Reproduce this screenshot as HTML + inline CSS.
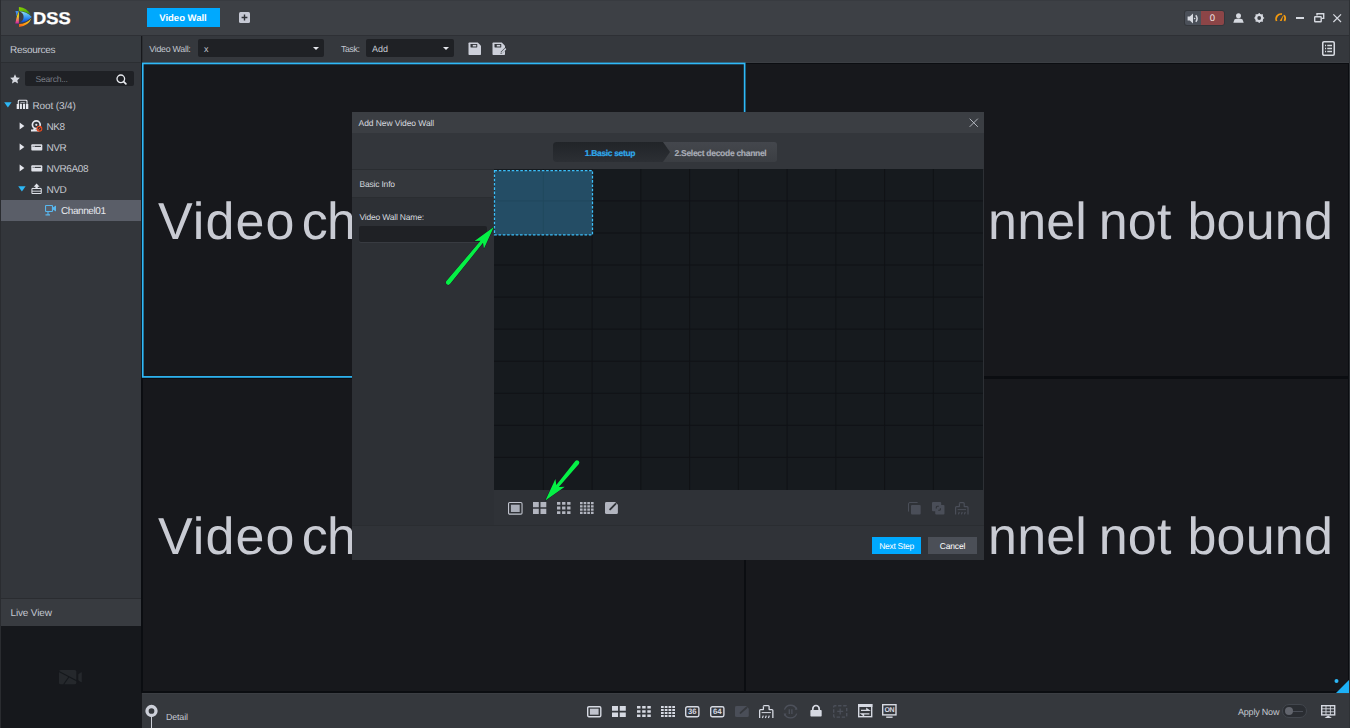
<!DOCTYPE html>
<html lang="en">
<head>
<meta charset="utf-8">
<title>DSS - Video Wall</title>
<style>
*{box-sizing:border-box;margin:0;padding:0}
html,body{width:1350px;height:728px;overflow:hidden;background:#17181c}
body{position:relative;text-rendering:geometricPrecision;font-family:"Liberation Sans",sans-serif;font-size:9.5px;color:#c9ccd4;-webkit-font-smoothing:antialiased}
.abs{position:absolute}
svg{position:absolute;overflow:visible}
/* title bar */
#titlebar{left:0;top:0;width:1350px;height:35px;background:#3d4045}
#tbline{left:0;top:35px;width:1350px;height:1px;background:#2e3035}
#logo-text{left:33.200px;top:8.900px;font-size:17px;font-weight:bold;color:#fff;letter-spacing:.1px;line-height:19px;-webkit-text-stroke:.3px #fff;transform-origin:0 0;transform:scaleX(1.075)}
#tab{left:147px;top:8px;width:73px;height:19px;background:#00a9fe;color:#fff;font-weight:bold;font-size:9.5px;line-height:21px;text-align:center;padding-right:1px}
#plus{left:239px;top:12px;width:11px;height:11px;background:#c6c9d4;border-radius:1.5px}
/* side bar */
#side{left:0;top:36px;width:141px;height:692px;background:#33363b}
#side-head{left:0;top:36px;width:141px;height:26px;background:#363a3f;font-size:10px;letter-spacing:-.3px;line-height:30.500px;padding-left:10px;color:#c3c7d0}
#side-line{left:0;top:62px;width:141px;height:1px;background:#2b2e32}
#search{left:25px;top:71px;width:109px;height:15px;background:#1f2125;border-radius:2px;color:#777b84;font-size:8.600px;letter-spacing:-.25px;line-height:17px;padding-left:10.500px}
.row{left:0;width:142px;height:21px;line-height:24px;font-size:10px;color:#c3c6ce;letter-spacing:-.42px}
.row span{position:absolute;top:0}
#sel{left:0;top:200px;width:141px;height:21px;background:#5a5e68}
#live-head{left:0;top:598px;width:141px;height:28px;background:#383b40;border-top:1px solid #2a2c30;font-size:10px;line-height:30px;padding-left:10.500px;letter-spacing:-.15px;color:#c3c7d0}
#live{left:0;top:626px;width:141px;height:102px;background:#16181c}
#lborder{left:0;top:0;width:1px;height:728px;background:#2a2c30}
/* toolbar */
#toolbar{left:142px;top:36px;width:1208px;height:27px;background:#35383d;border-left:1px solid #2b2e32}
.lbl{font-size:8.5px;color:#c3c7d0;line-height:12px;letter-spacing:-.15px}
.dd{background:#1f2125;border-radius:2px;height:18px;top:39px;font-size:9px;line-height:20.500px;color:#c3c7d0;padding-left:6px}
.dd i{position:absolute;right:4.700px;top:8px;width:0;height:0;border-left:3.400px solid transparent;border-right:3.400px solid transparent;border-top:3.800px solid #e6e8ee}
/* main */
#main{left:141px;top:63px;width:1208px;height:630px;background:#0b0d11}
.pane{background:#17181c}
.big{font-size:52px;line-height:60px;color:#c9cbd3;white-space:nowrap}
.bl{left:158px;letter-spacing:-.6px;word-spacing:-7.550px}
.br{right:15px;top:0;letter-spacing:.19px}
.clipr{left:989px;width:359px;height:62px;overflow:hidden}
#rborder{left:1349px;top:0;width:1px;height:728px;background:#2e3135}
/* bottom bar */
#bottom{left:142px;top:693px;width:1207px;height:35px;background:#35383d;border-top:1px solid #3b3e43}
/* dialog */
#dlg{left:352px;top:112px;width:632px;height:448px;background:#2d3035}
#dlg-title{left:0;top:0;width:632px;height:21px;background:#3b3e43;font-size:8.5px;line-height:22.500px;padding-left:6.600px;color:#d5d8df;letter-spacing:-.08px}
#dlg-steps{left:0;top:21px;width:632px;height:36px;background:#33363b}
#dlg-sline{left:0;top:57px;width:632px;height:1px;background:#2a2d31}
#step-pill{left:201px;top:30px;width:224px;height:20px;border-radius:3px;background:linear-gradient(#44474d,#3b3e43);overflow:hidden}
#bi-head{left:0;top:58px;width:142px;height:28px;background:#34373c;border-bottom:1px solid #2a2d31;font-size:8.5px;line-height:28.500px;padding-left:7.500px;color:#d5d8df;letter-spacing:-.2px}
#grid{left:142px;top:57px;width:489px;height:321px;background:#161a1e}
#iconbar{left:142px;top:378px;width:490px;height:35px;background:#2f3237}
#footer{left:0;top:413px;width:632px;height:35px;background:#303338;border-top:1px solid #2a2d31}
.btn{top:425px;height:17px;font-size:8.5px;line-height:18px;text-align:center;color:#fff}
</style>
</head>
<body>
<!-- TITLE BAR -->
<div id="titlebar" class="abs"></div>
<div id="tbline" class="abs"></div>
<div class="abs" style="left:0;top:0;width:1350px;height:1px;background:#383b40"></div>
<svg style="left:14px;top:6px" width="19" height="22" viewBox="0 0 19 22">
  <defs>
    <linearGradient id="lg1" x1="0" y1="0" x2="0" y2="1"><stop offset="0" stop-color="#e8f01a"/><stop offset=".4" stop-color="#f4d81a"/><stop offset=".75" stop-color="#ee6a70"/><stop offset="1" stop-color="#c818a8"/></linearGradient>
    <linearGradient id="lg2" x1="0" y1="0" x2="1" y2="1"><stop offset="0" stop-color="#8fd400"/><stop offset="1" stop-color="#2f9a10"/></linearGradient>
    <linearGradient id="lg3" x1="0" y1="0" x2="0" y2="1"><stop offset="0" stop-color="#8fe4f4"/><stop offset=".6" stop-color="#2f8ef0"/><stop offset="1" stop-color="#0a3fd0"/></linearGradient>
    <linearGradient id="lg4" x1="1" y1="0" x2="0" y2="1"><stop offset="0" stop-color="#ffe81a"/><stop offset=".6" stop-color="#ff9a10"/><stop offset="1" stop-color="#f0501a"/></linearGradient>
  </defs>
  <path d="M1.400 4.900H4.600L2.500 10.600Q2.400 7.500 1.400 4.900z" fill="#3f8ff0"/>
  <path d="M4.900 5.100V17.600L1.300 17.400Q2.200 13 3 10z" fill="url(#lg1)"/>
  <path d="M4.900 .900Q13.200 1.600 16.600 8.800Q11 4.600 4.900 4.900z" fill="url(#lg2)"/>
  <path d="M5.300 5.300Q12.500 5.400 17.800 11Q12.500 16.600 5.300 16.600Q9.600 15 9.600 11Q9.600 7 5.300 5.300z" fill="url(#lg3)"/>
  <path d="M5.100 18.100Q12.500 17.800 17.400 12.500Q14.600 19.600 5.100 21.100z" fill="url(#lg4)"/>
</svg>
<div id="logo-text" class="abs">DSS</div>
<div id="tab" class="abs">Video Wall</div>
<div id="plus" class="abs"></div>
<svg style="left:239px;top:12px" width="11" height="11" viewBox="0 0 11 11"><path d="M5.5 2.6v5.8M2.6 5.5h5.8" stroke="#2d3035" stroke-width="1.4" fill="none"/></svg>

<!-- top-right icons -->
<div class="abs" style="left:1185px;top:11px;width:16px;height:13.500px;background:#4b5059;border-radius:2px 0 0 2px;box-shadow:0 0 0 1px #33363b"></div>
<div class="abs" style="left:1201px;top:11px;width:23px;height:13.500px;background:#8c4547;border-radius:0 2px 2px 0;box-shadow:1px 0 0 0 #33363b,0 1px 0 0 #33363b,0 -1px 0 0 #33363b;color:#f1e4e4;font-size:9.500px;line-height:15px;text-align:center">0</div>
<svg style="left:1187px;top:12.500px" width="13" height="11" viewBox="0 0 13 11"><path d="M0.600 3.400h2.200L6 .600v9.800L2.800 7.600H.600z" fill="#d6d9e0"/><circle cx="7.600" cy="5.500" r=".8" fill="#d6d9e0"/><path d="M8.800 2.200q2.600 3.300 0 6.600" stroke="#d6d9e0" stroke-width="1.500" fill="none"/></svg>
<svg style="left:1232.500px;top:12.500px" width="11" height="10" viewBox="0 0 11 10"><circle cx="5.500" cy="2.700" r="2.500" fill="#d6d9e0"/><path d="M.300 9.800 L1.600 6.300 Q5.500 4.600 9.400 6.300 L10.700 9.800z" fill="#d6d9e0"/></svg>
<svg style="left:1254px;top:12.800px" width="10.400" height="10" viewBox="0 0 10.400 10"><path d="M4.56 1.15L4.58 0.04L5.82 0.04L5.84 1.15L7.47 1.83L8.27 1.06L9.14 1.93L8.37 2.73L9.05 4.36L10.16 4.38L10.16 5.62L9.05 5.64L8.37 7.27L9.14 8.07L8.27 8.94L7.47 8.17L5.84 8.85L5.82 9.96L4.58 9.96L4.56 8.85L2.93 8.17L2.13 8.94L1.26 8.07L2.03 7.27L1.35 5.64L0.24 5.62L0.24 4.38L1.35 4.36L2.03 2.73L1.26 1.93L2.13 1.06L2.93 1.83Z" fill="#d6d9e0"/><circle cx="5.200" cy="5" r="4.100" fill="#d6d9e0"/><circle cx="5.200" cy="5" r="1.900" fill="#3d4045"/></svg>
<svg style="left:1275px;top:13.300px" width="11" height="8.500" viewBox="0 0 22 17"><path d="M3.200 16 A9.800 9.800 0 0 1 14 2.200" stroke="#f39a0f" stroke-width="3.400" fill="none"/><path d="M18 4.600 A9.800 9.800 0 0 1 18.800 16" stroke="#f39a0f" stroke-width="3.400" fill="none"/><path d="M9.400 16 L17.600 2.400 L13.400 16z" fill="#f39a0f"/></svg>
<div class="abs" style="left:1296px;top:17.200px;width:8px;height:1.800px;background:#d6d9e0"></div>
<svg style="left:1313.500px;top:13px" width="10.500" height="9.500" viewBox="0 0 21 19"><path d="M6 5V1.400h13.400V10.800H16" stroke="#d6d9e0" stroke-width="2.800" fill="none"/><rect x="1.400" y="7.400" width="13" height="10" rx="1" stroke="#d6d9e0" stroke-width="2.800" fill="none"/></svg>
<svg style="left:1332.600px;top:13.800px" width="8.400" height="8.400" viewBox="0 0 9 9"><path d="M.400.400l8.200 8.200M8.600.400L.400 8.600" stroke="#d6d9e0" stroke-width="1.300" fill="none"/></svg>

<!-- SIDEBAR -->
<div id="side" class="abs"></div>
<div id="side-head" class="abs">Resources</div>
<div id="side-line" class="abs"></div>
<svg style="left:10px;top:74px" width="10" height="10" viewBox="0 0 20 20"><path d="M10 .500l2.900 6.300 6.800.800-5 4.700 1.300 6.800L10 15.700 4 19.100l1.300-6.800-5-4.700 6.800-.800z" fill="#d6d9e0"/></svg>
<div id="search" class="abs">Search...</div>
<svg style="left:116px;top:73.500px" width="12" height="11.500" viewBox="0 0 24 23"><circle cx="9.600" cy="9.600" r="7.600" stroke="#e8eaef" stroke-width="2.600" fill="none"/><path d="M15.200 15.200l4.600 4.600" stroke="#e8eaef" stroke-width="3.400" stroke-linecap="round"/></svg>

<div id="sel" class="abs"></div>
<div class="row abs" style="top:95px"><span style="left:32.500px;letter-spacing:-.12px">Root (3/4)</span></div>
<div class="row abs" style="top:116px"><span style="left:46.500px;letter-spacing:-.4px">NK8</span></div>
<div class="row abs" style="top:137px"><span style="left:46.500px">NVR</span></div>
<div class="row abs" style="top:158px"><span style="left:46.500px">NVR6A08</span></div>
<div class="row abs" style="top:179px"><span style="left:46.500px">NVD</span></div>
<div class="row abs" style="top:200px;color:#e6e8ee"><span style="left:61px">Channel01</span></div>
<!-- tree arrows -->
<svg style="left:4px;top:102px" width="8" height="6" viewBox="0 0 8 6"><path d="M.2.300h7.400L3.900 5.600z" fill="#2db7f5"/></svg>
<svg style="left:19px;top:122px" width="6" height="8" viewBox="0 0 6 8"><path d="M.6.400v7L5.400 3.900z" fill="#e6e8ee"/></svg>
<svg style="left:19px;top:143px" width="6" height="8" viewBox="0 0 6 8"><path d="M.6.400v7L5.400 3.900z" fill="#e6e8ee"/></svg>
<svg style="left:19px;top:164px" width="6" height="8" viewBox="0 0 6 8"><path d="M.6.400v7L5.400 3.900z" fill="#e6e8ee"/></svg>
<svg style="left:18px;top:186px" width="8" height="6" viewBox="0 0 8 6"><path d="M.2.300h7.400L3.900 5.600z" fill="#2db7f5"/></svg>
<!-- tree icons -->
<svg style="left:16px;top:99px" width="13" height="11" viewBox="0 0 13 11"><path d="M2.300 5V2.200Q2.300 1.300 3.200 1.300H10.100Q11 1.300 11 2.200V5" stroke="#e6e8ee" stroke-width="1.100" fill="none"/><path d="M4.600 3.500H8.800" stroke="#aeb1b9" stroke-width=".8"/><path d="M.700 4.900H3V10H.700zM3.900 4.900H5.900V10H3.900zM7 4.900H9V10H7zM9.900 4.900H12.300V10H9.900z" fill="#e6e8ee"/><path d="M4.900 3.500V5M8 3.500V5" stroke="#aeb1b9" stroke-width=".8"/></svg>
<svg style="left:30px;top:119px" width="14" height="14" viewBox="0 0 14 14"><circle cx="6.300" cy="5.800" r="3.900" stroke="#e6e8ee" stroke-width="1.700" fill="none"/><circle cx="6.300" cy="5.800" r="1.100" fill="#e6e8ee"/><path d="M1 10.400h2.200l.5-1h1.600v1H9v2.100H1z" fill="#e6e8ee"/><circle cx="9.400" cy="9.700" r="2.400" fill="#33363b" stroke="#ee4a1e" stroke-width="1.100"/><path d="M8 11.100l2.800-2.800" stroke="#ee4a1e" stroke-width="1"/></svg>
<svg style="left:30.600px;top:143.500px" width="12" height="7" viewBox="0 0 12 7"><rect x=".3" y=".3" width="11" height="6.200" rx=".9" fill="#dfe1e8"/><path d="M3.800 2.400H9.900" stroke="#33363b" stroke-width="1.100"/><path d="M1.500 2.400H3.800" stroke="#8b8e96" stroke-width="1.100"/></svg>
<svg style="left:30.600px;top:164.500px" width="12" height="7" viewBox="0 0 12 7"><rect x=".3" y=".3" width="11" height="6.200" rx=".9" fill="#dfe1e8"/><path d="M3.800 2.400H9.900" stroke="#33363b" stroke-width="1.100"/><path d="M1.500 2.400H3.800" stroke="#8b8e96" stroke-width="1.100"/></svg>
<svg style="left:30.800px;top:182.800px" width="11.200" height="11.200" viewBox="0 0 24 24"><path d="M12 1l6.500 7h-4v5h-5V8h-4z" fill="#e0e2e9"/><path d="M3 11.500h3.500M17.500 11.500H21" stroke="#e0e2e9" stroke-width="2"/><rect x="2" y="12" width="20" height="10.500" rx="1.200" stroke="#e0e2e9" stroke-width="2.200" fill="none"/><path d="M2 17.500h20" stroke="#e0e2e9" stroke-width="2"/></svg>
<svg style="left:45px;top:205px" width="11.500" height="11" viewBox="0 0 23 22"><rect x="1.100" y="1.100" width="13.800" height="12" rx="1" stroke="#58b7ee" stroke-width="2.200" fill="none"/><path d="M15.500 5l6.500-3.800v11.600L15.500 9z" fill="#58b7ee"/><path d="M6 13v6M1 19.800h9" stroke="#58b7ee" stroke-width="2.200" fill="none"/></svg>

<div id="live-head" class="abs">Live View</div>
<div id="live" class="abs"></div>
<svg style="left:59px;top:669.500px" width="23" height="14.500" viewBox="0 0 23 14.500"><rect x="0" y="0" width="17.300" height="14.300" rx="1.600" fill="#25282c"/><path d="M19.300 4.200L22.200 2.300Q22.800 2.100 22.800 2.800V11.800Q22.800 12.500 22.200 12.200L19.300 10.300z" fill="#25282c"/><path d="M0 1.600L19.500 11.800" stroke="#15181c" stroke-width="1.100"/><path d="M9.800 7L4.600 14.500" stroke="#15181c" stroke-width="1.100"/></svg>
<div id="lborder" class="abs"></div>

<!-- TOOLBAR -->
<div id="toolbar" class="abs"></div>
<div class="lbl abs" style="left:149.300px;top:42.800px;font-size:8.800px;letter-spacing:-.25px">Video Wall:</div>
<div class="dd abs" style="left:198px;width:126px">x<i></i></div>
<div class="lbl abs" style="left:341px;top:42.800px;font-size:8.800px;letter-spacing:-.4px">Task:</div>
<div class="dd abs" style="left:366px;width:88px">Add<i></i></div>
<svg style="left:468px;top:42px" width="13.500" height="13.500" viewBox="0 0 27 27"><path d="M2.500 1h17L26 7.500v17q0 1.500-1.500 1.500h-22Q1 26 1 24.500v-22Q1 1 2.500 1z" fill="#cdd0da"/><rect x="5" y="4" width="13.500" height="7" rx=".8" fill="#33363b"/><rect x="9.500" y="5.800" width="7" height="3.200" fill="#cdd0da"/></svg>
<svg style="left:492px;top:42px" width="14.500" height="13.500" viewBox="0 0 29 27"><path d="M2.500 1h17L26 7.500v17q0 1.500-1.500 1.500h-22Q1 26 1 24.500v-22Q1 1 2.500 1z" fill="#cdd0da"/><rect x="5" y="4" width="13.500" height="7" rx=".8" fill="#33363b"/><rect x="9.500" y="5.800" width="7" height="3.200" fill="#cdd0da"/><path d="M17 24l1.200-5 8-8 3 3-8 8z" fill="#33363b"/><path d="M20 21l6.800-6.800" stroke="#cdd0da" stroke-width="3.200" stroke-linecap="round"/></svg>
<svg style="left:1322px;top:41px" width="13" height="15" viewBox="0 0 26 30"><rect x="1.500" y="1.500" width="23" height="27" rx="2.500" stroke="#d6d9e0" stroke-width="3.100" fill="none"/><path d="M6 9h2.200M10.500 9H20M6 15h2.200M10.500 15H20M6 21h2.200M10.500 21H20" stroke="#d6d9e0" stroke-width="2.600"/></svg>

<div class="abs" style="left:745px;top:62px;width:604px;height:1px;background:#3b3e43"></div>
<!-- MAIN -->
<div id="main" class="abs"></div>
<div class="pane abs" style="left:142px;top:63px;width:603px;height:314px"></div>
<svg style="left:0;top:0" width="1350" height="728" viewBox="0 0 1350 728"><rect x="142.750" y="63.450" width="601.900" height="313.450" fill="none" stroke="#2fb9f8" stroke-width="1.700"/></svg>
<div class="pane abs" style="left:746px;top:64px;width:602px;height:312px"></div>
<div class="pane abs" style="left:143px;top:379px;width:601px;height:312px"></div>
<div class="pane abs" style="left:746px;top:379px;width:602px;height:312px"></div>
<div class="big bl abs" style="top:192px"><span style="letter-spacing:1.070px">Video</span> channel not bound</div>
<div class="clipr abs" style="top:192px"><div class="big br abs"><span>Video</span> <span style="margin-right:-3.100px">channel</span> <span style="margin-right:1.300px">not</span> bound</div></div>
<div class="big bl abs" style="top:507px"><span style="letter-spacing:1.070px">Video</span> channel not bound</div>
<div class="clipr abs" style="top:507px"><div class="big br abs"><span>Video</span> <span style="margin-right:-3.100px">channel</span> <span style="margin-right:1.300px">not</span> bound</div></div>
<svg style="left:1336px;top:678px" width="13" height="15" viewBox="0 0 13 15"><path d="M13 2v13H0z" fill="#1db0f6"/><circle cx=".5" cy="3" r="2" fill="#2db7f5"/></svg>
<div id="rborder" class="abs"></div>

<!-- BOTTOM BAR -->
<div id="bottom" class="abs"></div>
<svg style="left:145px;top:704px" width="13" height="24" viewBox="0 0 13 24"><circle cx="6.500" cy="7" r="4.500" stroke="#cdd0d9" stroke-width="3.300" fill="none"/><path d="M6.500 12.500V24" stroke="#cdd0d9" stroke-width="1"/></svg>
<div class="lbl abs" style="left:166px;top:710.800px;font-size:8.900px">Detail</div>
<div class="lbl abs" style="left:1238px;top:705.800px;font-size:9px;letter-spacing:-.2px">Apply Now</div>
<div class="abs" style="left:1282px;top:704px;width:25px;height:14px;border-radius:7px;background:#2a2d32;border:1px solid #42464d"></div>
<div class="abs" style="left:1291px;top:710.500px;width:12px;height:1.500px;background:#4a4e57"></div>
<div class="abs" style="left:1284.500px;top:707px;width:8px;height:8px;border-radius:4px;background:#62656d"></div>

<!--BOTICONS-->
<svg style="left:587px;top:705.6px" width="14.5" height="11.4" viewBox="0 0 14.5 11.4"><rect x="0.7" y="0.7" width="13.1" height="10" rx="1.2" fill="none" stroke="#d6d9e2" stroke-width="1.4"/><rect x="2.9" y="2.7" width="8.7" height="6" fill="#c0c3cd"/></svg>
<svg style="left:611.6px;top:705.7px" width="13.8" height="11.1" viewBox="0 0 13.8 11.1"><path d="M0.00 0.00h6.05v4.70h-6.05zM7.75 0.00h6.05v4.70h-6.05zM0.00 6.40h6.05v4.70h-6.05zM7.75 6.40h6.05v4.70h-6.05z" fill="#d6d9e2"/></svg>
<svg style="left:636.8px;top:705.7px" width="13.8" height="11.1" viewBox="0 0 13.8 11.1"><path d="M0.00 0.00h3.47v2.57h-3.47zM5.17 0.00h3.47v2.57h-3.47zM10.33 0.00h3.47v2.57h-3.47zM0.00 4.27h3.47v2.57h-3.47zM5.17 4.27h3.47v2.57h-3.47zM10.33 4.27h3.47v2.57h-3.47zM0.00 8.53h3.47v2.57h-3.47zM5.17 8.53h3.47v2.57h-3.47zM10.33 8.53h3.47v2.57h-3.47z" fill="#d6d9e2"/></svg>
<svg style="left:661.2px;top:705.7px" width="14" height="11.1" viewBox="0 0 14 11.1"><path d="M0.00 0.00h2.71v1.99h-2.71zM3.76 0.00h2.71v1.99h-2.71zM7.53 0.00h2.71v1.99h-2.71zM11.29 0.00h2.71v1.99h-2.71zM0.00 3.04h2.71v1.99h-2.71zM3.76 3.04h2.71v1.99h-2.71zM7.53 3.04h2.71v1.99h-2.71zM11.29 3.04h2.71v1.99h-2.71zM0.00 6.07h2.71v1.99h-2.71zM3.76 6.07h2.71v1.99h-2.71zM7.53 6.07h2.71v1.99h-2.71zM11.29 6.07h2.71v1.99h-2.71zM0.00 9.11h2.71v1.99h-2.71zM3.76 9.11h2.71v1.99h-2.71zM7.53 9.11h2.71v1.99h-2.71zM11.29 9.11h2.71v1.99h-2.71z" fill="#d6d9e2"/></svg>
<svg style="left:685.4px;top:705.6px" width="14.6" height="11.4" viewBox="0 0 14.6 11.4"><rect x=".7" y=".7" width="13.200" height="10" rx="1.600" fill="none" stroke="#d6d9e2" stroke-width="1.400"/><text x="7.300" y="8.500" text-anchor="middle" font-family="Liberation Sans, sans-serif" font-weight="bold" font-size="7.800" fill="#d6d9e2">36</text></svg>
<svg style="left:709.8px;top:705.6px" width="14.6" height="11.4" viewBox="0 0 14.6 11.4"><rect x=".7" y=".7" width="13.200" height="10" rx="1.600" fill="none" stroke="#d6d9e2" stroke-width="1.400"/><text x="7.300" y="8.500" text-anchor="middle" font-family="Liberation Sans, sans-serif" font-weight="bold" font-size="7.800" fill="#d6d9e2">64</text></svg>
<svg style="left:735px;top:705.7px" width="13.8" height="11.1" viewBox="0 0 13.8 11.1"><path d="M1.5 0H11L13.8 2.8V9.6Q13.8 11.1 12.3 11.1H1.5Q0 11.1 0 9.6V1.5Q0 0 1.5 0z" fill="#4a4e58"/><path d="M5.52 6.882L11.316 1.776" stroke="#35383d" stroke-width="1.9" stroke-linecap="round"/></svg>
<svg style="left:759px;top:704.6px" width="14.5" height="13" viewBox="0 0 14.5 13"><path d="M0.65 13V5.6Q0.65 4.6 1.6 4.6H4.2Q4.4 4.6 4.4 4.2V1.4" fill="none" stroke="#d6d9e2" stroke-width="1.3"/><path d="M4.4 1.6Q4.4 .6 5.4 .6H9.1Q10.1 .6 10.1 1.6V4.2Q10.1 4.6 10.3 4.6H12.9Q13.85 4.6 13.85 5.6V13" fill="none" stroke="#d6d9e2" stroke-width="1.3"/><path d="M2.6 7.6H11.9" stroke="#d6d9e2" stroke-width="1"/><path d="M3.4 13l.9-2.4M6.4 13l.9-2.4M9.4 13l.9-2.4" stroke="#d6d9e2" stroke-width="1.2"/></svg>
<svg style="left:783.4px;top:703.6px" width="15.2" height="15.2" viewBox="0 0 15.2 15.2"><path d="M13.600 5.200A6.500 6.500 0 0 0 1.500 5.600M1.600 10A6.500 6.500 0 0 0 13.700 9.600" fill="none" stroke="#4d515b" stroke-width="1.300"/><path d="M11.600 5.800L14.600 5.600L13.600 3z M3.600 9.400L.6 9.600L1.600 12.200z" fill="#4d515b"/><path d="M6.300 5.200V10M8.900 5.200V10" stroke="#4d515b" stroke-width="1.300"/></svg>
<svg style="left:809.6px;top:704.4px" width="12.4" height="12.8" viewBox="0 0 12.4 12.8"><path d="M2.800 6.600V4.900A3.200 3.400 0 0 1 9.200 4.900V6.600" fill="none" stroke="#d6d9e2" stroke-width="1.700"/><rect x=".4" y="6" width="11.300" height="6.600" rx=".8" fill="#d6d9e2"/></svg>
<svg style="left:833.2px;top:704.8px" width="14.4" height="12.8" viewBox="0 0 14.4 12.8"><rect x=".7" y=".7" width="13" height="11.400" rx="1" fill="none" stroke="#4b4f59" stroke-width="1.400" stroke-dasharray="3.400 1.700" stroke-dashoffset="1.700"/><path d="M7.200 3.400V9.400M4.200 6.400H10.200" stroke="#4b4f59" stroke-width="1.300"/></svg>
<svg style="left:857.9px;top:704.3px" width="14.4" height="13.4" viewBox="0 0 14.4 13.4"><rect x=".7" y=".7" width="13" height="12" fill="none" stroke="#d6d9e2" stroke-width="1.400"/><path d="M0 0H14.400V3H0z" fill="#d6d9e2"/><path d="M3 6.400H10M8.800 4.800L11 6.400H8.800zM4.400 9.800H11.400M5.600 11.400L3.400 9.800H5.600z" stroke="#d6d9e2" stroke-width="1.200" fill="#d6d9e2"/></svg>
<svg style="left:882.3px;top:703.8px" width="14.7" height="14.2" viewBox="0 0 14.7 14.2"><rect x=".7" y=".7" width="13.300" height="10.200" fill="none" stroke="#d6d9e2" stroke-width="1.400"/><text x="7.350" y="8.500" text-anchor="middle" font-family="Liberation Sans, sans-serif" font-weight="bold" font-size="7" letter-spacing="-.4" fill="#d6d9e2">ON</text><path d="M4.200 13.200H10.600" stroke="#d6d9e2" stroke-width="1.400"/></svg>
<svg style="left:1321px;top:705px" width="14.4" height="13" viewBox="0 0 14.4 13"><rect x=".7" y=".7" width="13" height="9.200" fill="none" stroke="#d6d9e2" stroke-width="1.400"/><path d="M5 .7V9.900M9.400 .7V9.900M.7 3.800H13.700M.7 6.800H13.700" stroke="#d6d9e2" stroke-width=".9"/><path d="M3.600 13L7.200 10.400L10.800 13z" fill="#d6d9e2"/></svg>
<!--/BOTICONS-->
<!-- DIALOG -->
<div id="dlg" class="abs">
  <div id="dlg-title" class="abs">Add New Video Wall</div>
  <svg style="left:616.800px;top:6.300px" width="9.500" height="9.500" viewBox="0 0 10 10"><path d="M.700.700l8.600 8.600M9.300.700L.700 9.300" stroke="#c6c9d1" stroke-width=".9" fill="none"/></svg>
  <div id="dlg-steps" class="abs"></div>
  <div id="dlg-sline" class="abs"></div>
  <div id="step-pill" class="abs">
    <svg style="left:0;top:0" width="224" height="20" viewBox="0 0 224 20"><defs><linearGradient id="sg" x1="0" y1="0" x2="0" y2="1"><stop offset="0" stop-color="#212428"/><stop offset="1" stop-color="#2c2f34"/></linearGradient></defs><path d="M0 0h110l7 10-7 10H0z" fill="url(#sg)"/></svg>
    <div class="abs" style="left:0;top:0;width:114px;text-align:center;line-height:22.400px;font-size:8.500px;font-weight:bold;letter-spacing:-.35px;color:#30a9ec;-webkit-text-stroke:.2px #30a9ec">1.Basic setup</div>
    <div class="abs" style="left:112.500px;top:0;width:110px;text-align:center;line-height:22.400px;font-size:8.500px;font-weight:bold;letter-spacing:-.3px;color:#a9adb6;-webkit-text-stroke:.15px #a9adb6">2.Select decode channel</div>
  </div>
  <div id="bi-head" class="abs">Basic Info</div>
  <div class="abs" style="left:7.500px;top:99px;font-size:8.500px;line-height:12px;color:#d5d8df;letter-spacing:-.2px">Video Wall Name:</div>
  <div class="abs" style="left:7px;top:114.300px;width:128px;height:16.200px;background:#1f2125;border-radius:2px;box-shadow:0 1px 0 #383b41"></div>
  <div id="grid" class="abs">
    <svg style="left:0;top:0" width="489" height="321" viewBox="0 0 489 321">
      <g stroke="#101216" stroke-width="1" fill="none"><path d="M49.35 0V321M98.10 0V321M146.85 0V321M195.60 0V321M244.35 0V321M293.10 0V321M341.85 0V321M390.60 0V321M439.35 0V321"/><path d="M0 31.91H489M0 63.97H489M0 96.03H489M0 128.09H489M0 160.15H489M0 192.21H489M0 224.27H489M0 256.33H489M0 288.39H489"/></g>
      <rect x=".5" y="1.600" width="98" height="64.300" fill="#244d65"/>
      <path d="M49.350 1.600V65.900M0 31.910H98" stroke="#21485e" stroke-width="1"/>
      <rect x=".5" y="1.600" width="98" height="64.300" fill="none" stroke="#3cc0fa" stroke-width="1.250" stroke-dasharray="2.600 1.700"/>
    </svg>
  </div>
  <div id="iconbar" class="abs"></div>
  <div id="footer" class="abs"></div>
  <div class="btn abs" style="left:520px;width:49px;background:#00a9fe;letter-spacing:-.3px">Next Step</div>
  <div class="btn abs" style="left:576px;width:49px;background:#4b4f57;letter-spacing:-.15px">Cancel</div>
</div>

<!--DLGICONS-->
<svg style="left:508px;top:501.7px" width="14.6" height="12.7" viewBox="0 0 14.6 12.7"><rect x="0.55" y="0.55" width="13.5" height="11.6" rx="1.2" fill="none" stroke="#c0c3cd" stroke-width="1.1"/><rect x="2.9" y="2.7" width="8.8" height="7.3" fill="#a9adb8"/></svg>
<svg style="left:532.8px;top:502.2px" width="13.3" height="12" viewBox="0 0 13.3 12"><path d="M0.00 0.00h5.80v5.15h-5.80zM7.50 0.00h5.80v5.15h-5.80zM0.00 6.85h5.80v5.15h-5.80zM7.50 6.85h5.80v5.15h-5.80z" fill="#b2b5bf"/></svg>
<svg style="left:556.8px;top:502.2px" width="13.5" height="12" viewBox="0 0 13.5 12"><path d="M0.00 0.00h3.37v2.87h-3.37zM5.07 0.00h3.37v2.87h-3.37zM10.13 0.00h3.37v2.87h-3.37zM0.00 4.57h3.37v2.87h-3.37zM5.07 4.57h3.37v2.87h-3.37zM10.13 4.57h3.37v2.87h-3.37zM0.00 9.13h3.37v2.87h-3.37zM5.07 9.13h3.37v2.87h-3.37zM10.13 9.13h3.37v2.87h-3.37z" fill="#b2b5bf"/></svg>
<svg style="left:580px;top:502.2px" width="13.6" height="12" viewBox="0 0 13.6 12"><path d="M0.00 0.00h2.61v2.21h-2.61zM3.66 0.00h2.61v2.21h-2.61zM7.32 0.00h2.61v2.21h-2.61zM10.99 0.00h2.61v2.21h-2.61zM0.00 3.26h2.61v2.21h-2.61zM3.66 3.26h2.61v2.21h-2.61zM7.32 3.26h2.61v2.21h-2.61zM10.99 3.26h2.61v2.21h-2.61zM0.00 6.53h2.61v2.21h-2.61zM3.66 6.53h2.61v2.21h-2.61zM7.32 6.53h2.61v2.21h-2.61zM10.99 6.53h2.61v2.21h-2.61zM0.00 9.79h2.61v2.21h-2.61zM3.66 9.79h2.61v2.21h-2.61zM7.32 9.79h2.61v2.21h-2.61zM10.99 9.79h2.61v2.21h-2.61z" fill="#b2b5bf"/></svg>
<svg style="left:604.8px;top:502.2px" width="12.9" height="11.9" viewBox="0 0 12.9 11.9"><path d="M1.5 0H10.1L12.9 2.8V10.4Q12.9 11.9 11.4 11.9H1.5Q0 11.9 0 10.4V1.5Q0 0 1.5 0z" fill="#b2b5bf"/><path d="M5.16 7.378L10.578 1.904" stroke="#2f3237" stroke-width="1.9" stroke-linecap="round"/></svg>
<svg style="left:908.3px;top:501.7px" width="12.8" height="12.7" viewBox="0 0 12.8 12.7"><path d="M.5 9.600V2Q.5 .5 2 .5H9.600" fill="none" stroke="#4a4e58" stroke-width="1"/><rect x="3" y="3" width="9.700" height="9.500" rx="1" fill="#4a4e58"/></svg>
<svg style="left:932.4px;top:502px" width="12.6" height="12.5" viewBox="0 0 12.6 12.5"><rect x="0" y="0" width="9.200" height="9.200" rx="1" fill="#4a4e58"/><rect x="3.200" y="3" width="9.300" height="9.400" rx="1" fill="#4a4e58"/><path d="M6.800 4.300H5.400Q4.300 4.300 4.300 5.400V6.600M6.200 8.300H7.400Q8.400 8.300 8.400 7.300V6.200" fill="none" stroke="#2f3237" stroke-width="1.100"/></svg>
<svg style="left:955.4px;top:502px" width="13.6" height="12.4" viewBox="0 0 13.6 12.4"><path d="M0.6 12.4V5.6Q0.6 4.6 1.6 4.6H4.2Q4.4 4.6 4.4 4.2V1.4" fill="none" stroke="#4a4e58" stroke-width="1.2"/><path d="M4.4 1.6Q4.4 .6 5.4 .6H8.2Q9.2 .6 9.2 1.6V4.2Q9.2 4.6 9.4 4.6H12Q13 4.6 13 5.6V12.4" fill="none" stroke="#4a4e58" stroke-width="1.2"/><path d="M2.6 7.6H11" stroke="#4a4e58" stroke-width="1"/><path d="M3.4 12.4l.9-2.4M6.4 12.4l.9-2.4M9.4 12.4l.9-2.4" stroke="#4a4e58" stroke-width="1.2"/></svg>
<!--/DLGICONS-->
<!-- green annotation arrows -->
<svg style="left:0;top:0" width="1350" height="728" viewBox="0 0 1350 728">
  <g fill="#05f045" stroke="#1c0b22" stroke-width=".8" stroke-linejoin="round" paint-order="stroke">
    <path d="M450.0 284.1L483.0 242.8L483.9 248.7L493.8 227.1L474.5 241.0L480.5 240.8L446.4 281.1A2.35 2.35 0 0 0 450.0 284.1Z"/>
    <path d="M575.3 461.0L556.3 484.9L555.4 478.9L545.4 500.5L564.8 486.7L558.8 486.9L578.9 464.0A2.35 2.35 0 0 0 575.3 461.0Z"/>
  </g>
</svg>
</body>
</html>
